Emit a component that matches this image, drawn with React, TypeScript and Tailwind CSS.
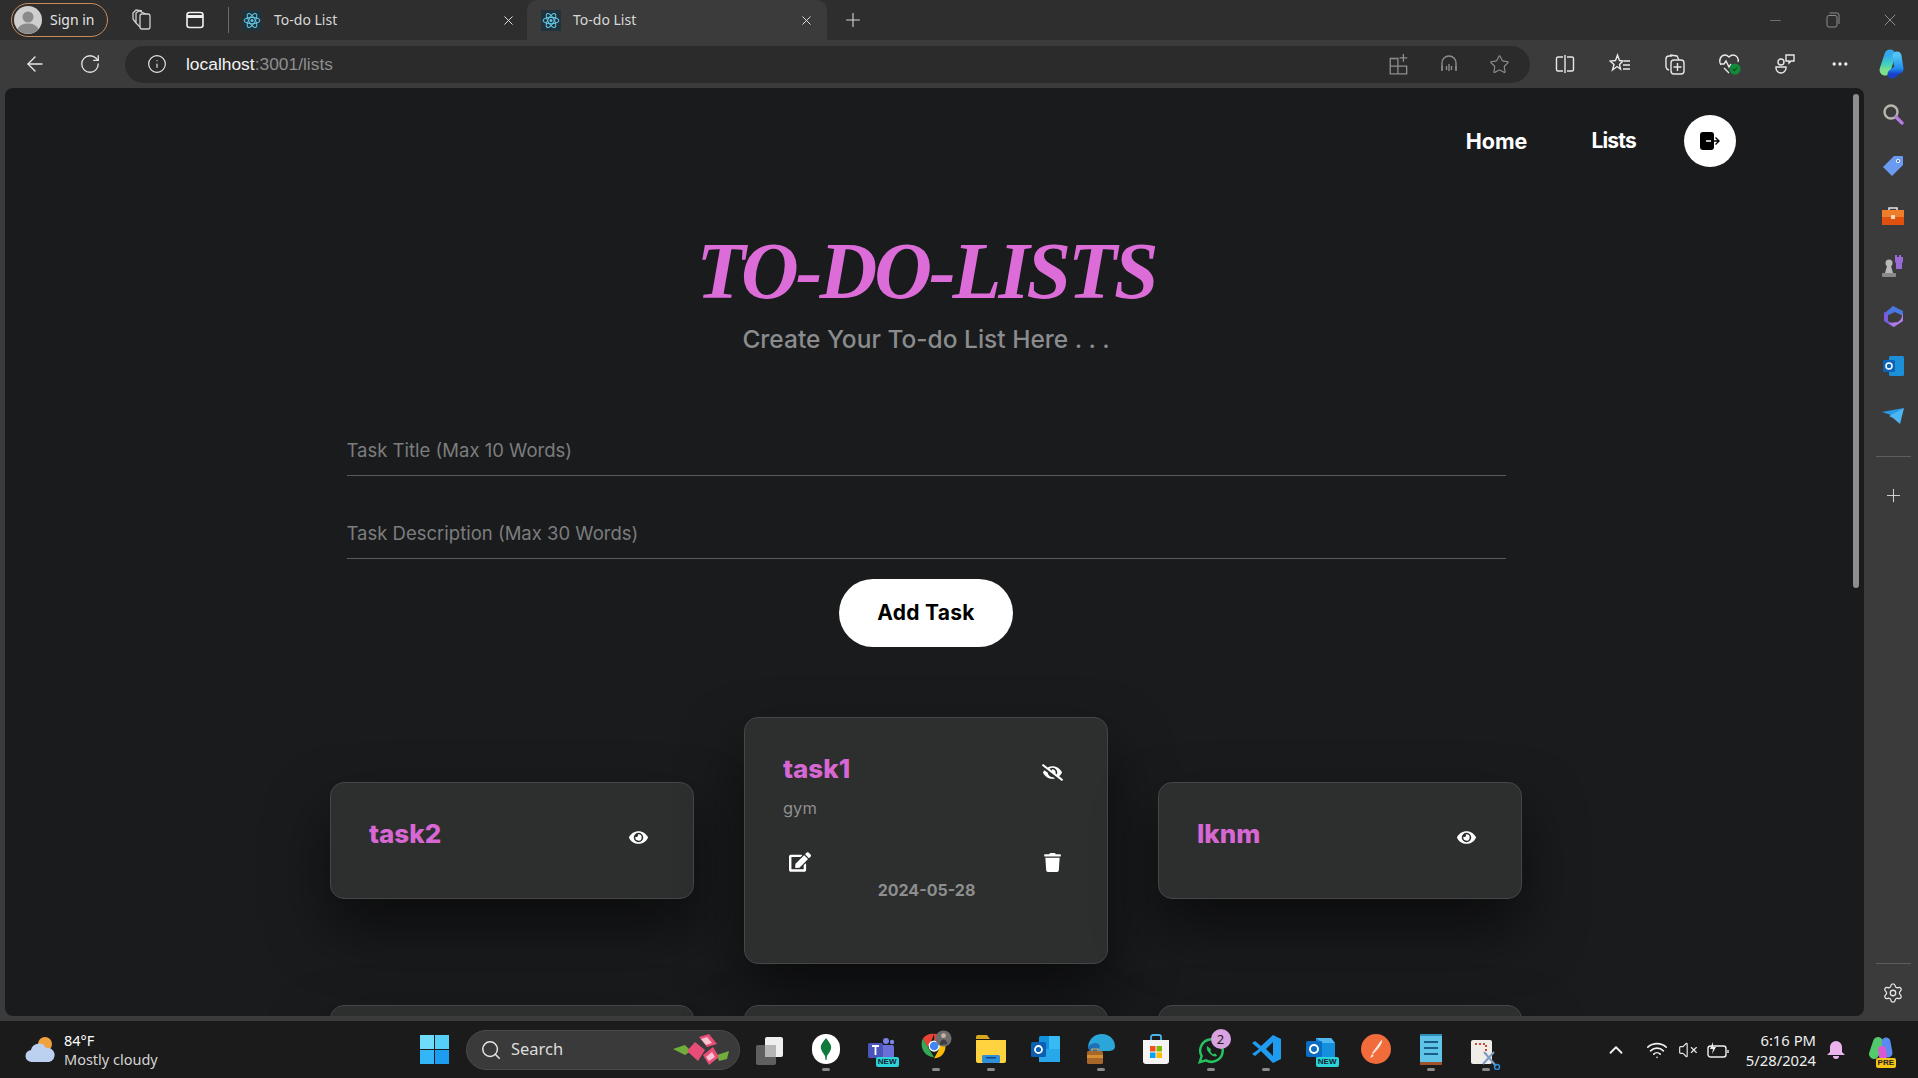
import { FaEdit, FaEye, FaEyeSlash, FaTrash } from 'react-icons/fa'
import {
  ArrowLeft,
  ChevronUp,
  Ellipsis,
  Info,
  Minus,
  Plus,
  RotateCw,
  Search,
  Settings,
  Star,
  VolumeX,
  Wifi,
  X,
} from 'lucide-react'

const POPPINS = "font-['Inter','Noto_Sans',sans-serif]"

function AtomIcon() {
  return (
    <span className="flex h-[21px] w-[20px] shrink-0 items-center justify-center bg-[#20323c]">
      <svg width="18" height="19" viewBox="0 0 24 24" fill="none" stroke="#61c7e6" strokeWidth="1.4">
        <ellipse cx="12" cy="12" rx="10.5" ry="4.2" />
        <ellipse cx="12" cy="12" rx="10.5" ry="4.2" transform="rotate(60 12 12)" />
        <ellipse cx="12" cy="12" rx="10.5" ry="4.2" transform="rotate(120 12 12)" />
        <circle cx="12" cy="12" r="2" fill="#61c7e6" stroke="none" />
      </svg>
    </span>
  )
}

function BrowserTab({ active }: { active?: boolean }) {
  return (
    <div
      className={
        active
          ? 'flex h-10 w-[300px] items-center rounded-t-[10px] bg-[#3b3b3b] pl-[14px] pr-[13px]'
          : 'flex h-10 w-[297px] items-center pl-[12px] pr-[11px]'
      }
    >
      <AtomIcon />
      <span className="-mt-px ml-3 flex-1 font-['Noto_Sans',sans-serif] text-[14px] text-[#d8d8d8]">To-do List</span>
      <X size={15} strokeWidth={1.5} className="text-[#e6e6e6]" />
    </div>
  )
}

function TabStrip() {
  return (
    <div className="flex h-10 shrink-0 items-center bg-[#2e2e2e] pl-[11px]">
      <div className="flex h-[34px] w-[97px] items-center rounded-full border border-[#c98b5c] pl-[2px]">
        <svg width="28" height="28" viewBox="0 0 28 28">
          <circle cx="14" cy="14" r="14" fill="#cfcfcf" />
          <circle cx="14" cy="11" r="5.5" fill="#8a8a8a" />
          <path d="M3.5 23a11 8 0 0 1 21 0a14 14 0 0 1-21 0z" fill="#8a8a8a" />
        </svg>
        <span className="-mt-px ml-[8px] font-['Noto_Sans',sans-serif] text-[14px] text-[#e4e4e4]">Sign in</span>
      </div>
      <div className="ml-[7px] flex w-[53px] justify-center">
        <svg width="22" height="24" viewBox="0 0 22 24" fill="none" stroke="#cfcfcf" strokeWidth="1.3">
          <rect x="9" y="6" width="10" height="15" rx="2" />
          <path d="M9 19 5 15V5l3-2 7 3M5 15 2 11V5l3-3 6 1" />
        </svg>
      </div>
      <div className="flex w-[53px] justify-center">
        <svg width="20" height="20" viewBox="0 0 20 20" fill="none" stroke="#f0f0f0" strokeWidth="1.6">
          <rect x="2" y="2.5" width="16" height="15" rx="2.5" />
          <path d="M2 6.5h16" strokeWidth="3" />
        </svg>
      </div>
      <div className="ml-[7px] mr-px h-[26px] w-px bg-[#6a6a6a]" />
      <BrowserTab />
      <BrowserTab active />
      <div className="flex w-[52px] justify-center">
        <Plus size={22} strokeWidth={1.2} className="text-[#d8d8d8]" />
      </div>
      <div className="flex-1" />
      <div className="flex w-[57px] justify-center">
        <Minus size={17} strokeWidth={1} className="text-[#8c8c8c]" />
      </div>
      <div className="flex w-[57px] justify-center">
        <svg width="14" height="16" viewBox="0 0 14 16" fill="none" stroke="#8c8c8c">
          <rect x="1" y="3.5" width="10" height="11.5" rx="2" />
          <path d="M3.5 1h7.5A2 2 0 0 1 13 3v9" />
        </svg>
      </div>
      <div className="flex w-[57px] justify-center">
        <X size={20} strokeWidth={1} className="text-[#a0a0a0]" />
      </div>
    </div>
  )
}

function Slot({ children, w = 'w-[55px]' }: { children: React.ReactNode; w?: string }) {
  return <div className={`flex shrink-0 justify-center ${w}`}>{children}</div>
}

function Toolbar() {
  const line = { fill: 'none', stroke: '#e8e8e8', strokeWidth: 1.4 }
  return (
    <div className="flex h-12 shrink-0 items-center bg-[#3b3b3b] pl-2">
      <Slot w="w-[54px]">
        <ArrowLeft size={24} strokeWidth={1.4} className="text-[#e8e8e8]" />
      </Slot>
      <Slot w="w-[55px]">
        <RotateCw size={22} strokeWidth={1.4} className="text-[#e8e8e8]" />
      </Slot>
      <div className="ml-2 flex h-[37px] w-[1405px] shrink-0 items-center rounded-full bg-[#2b2b2b] pl-[22px] pr-[6px]">
        <Info size={20} strokeWidth={1.4} className="text-[#e8e8e8]" />
        <span className="ml-[19px] flex-1 font-['Liberation_Sans',sans-serif] text-[17.4px] text-[#f2f2f2]">
          localhost<span className="text-[#8f8f8f]">:3001/lists</span>
        </span>
        <Slot w="w-[51px]">
          <svg width="22" height="23" viewBox="0 0 20 21" fill="none" stroke="#8e8e8e" strokeWidth="1.2">
            <path d="M2 5h7v7H2zM2 12h7v7H2zM9 12h8v7H9z" />
            <path d="M14 1v7M10.5 4.5h7" />
          </svg>
        </Slot>
        <Slot w="w-[50px]">
          <svg width="18" height="20" viewBox="0 0 18 20" fill="none" stroke="#8e8e8e" strokeWidth="1.4">
            <path d="M2 16V9a7 7 0 0 1 14 0v7" />
            <path d="M2 12v5M16 12v5M6.5 12v4M9 10v7M11.5 12v4" />
          </svg>
        </Slot>
        <Slot w="w-[50px]">
          <Star size={21} strokeWidth={1.3} className="text-[#8e8e8e]" />
        </Slot>
      </div>
      <div className="ml-[7px] flex items-center">
        <Slot>
          <svg width="20" height="22" viewBox="0 0 20 22" {...line}>
            <path d="M8 4H3a1.5 1.5 0 0 0-1.5 1.5v11A1.5 1.5 0 0 0 3 18h5M12 4h5a1.5 1.5 0 0 1 1.5 1.5v11A1.5 1.5 0 0 1 17 18h-5M10 2v18" />
          </svg>
        </Slot>
        <Slot>
          <svg width="22" height="22" viewBox="0 0 22 22" {...line}>
            <path d="m8.500 2 2 5.500 3.500.5-3.500 3.500 1 4.500-3.500-2.500-4.500 3.500 1.500-5.500L1 8l5.500-.5z" />
            <path d="M15 8h6M14 12h7M14 16h7" />
          </svg>
        </Slot>
        <Slot>
          <svg width="22" height="23" viewBox="0 0 22 23" {...line}>
            <path d="M8 3H5a3 3 0 0 0-3 3v8a4 4 0 0 0 3 3M6 2l7 1 2 4" />
            <rect x="7" y="7" width="13" height="14" rx="3" />
            <path d="M13.5 10v8M9.5 14h8" />
          </svg>
        </Slot>
        <Slot>
          <svg width="24" height="24" viewBox="0 0 24 24">
            <path
              d="M3 13C0 8 3 3 7 3c2 0 3 1 4 2 1-1 2-2 4-2 4 0 6 4 5 7M2 12h4l2-3 3 6 2-3M6 16l5 5"
              {...line}
            />
            <circle cx="17" cy="17" r="5.5" fill="#138a3a" />
            <path d="m14.8 17 1.6 1.6 2.8-3" fill="none" stroke="#0c4f22" strokeWidth="1.2" />
          </svg>
        </Slot>
        <Slot>
          <svg width="22" height="22" viewBox="0 0 22 22" {...line}>
            <circle cx="7" cy="9" r="3" />
            <path d="M2 14h10v1a5 5 0 0 1-10 0z" />
            <path d="M12 2h8v6h-3l-2 2V8h-3z" />
          </svg>
        </Slot>
        <Slot>
          <Ellipsis size={20} strokeWidth={2} className="text-[#f0f0f0]" />
        </Slot>
        <Slot w="w-[50px]">
          <svg width="30" height="32" viewBox="0 0 30 32" fill="none" strokeLinecap="round">
            <defs>
              <linearGradient id="copilotLeft" x1="0" y1="0" x2="0" y2="1">
                <stop offset="0" stopColor="#35a8ee" />
                <stop offset="0.6" stopColor="#3fd0c0" />
                <stop offset="1" stopColor="#7fe08a" />
              </linearGradient>
              <linearGradient id="copilotRight" x1="0" y1="0" x2="0" y2="1">
                <stop offset="0" stopColor="#4fc4f5" />
                <stop offset="0.7" stopColor="#1f8cf0" />
                <stop offset="1" stopColor="#1840c8" />
              </linearGradient>
            </defs>
            <path d="M13 7 8 22" stroke="url(#copilotLeft)" strokeWidth="11" />
            <path d="M20 8 22 21 15 26" stroke="url(#copilotRight)" strokeWidth="9" strokeLinejoin="round" />
          </svg>
        </Slot>
      </div>
    </div>
  )
}

function LogoutIcon() {
  return (
    <svg width="24" height="20" viewBox="0 0 24 20">
      <rect x="2" y="1" width="14" height="18" rx="3" fill="#000" />
      <path d="M8 10h5" stroke="#fff" strokeWidth="1.4" />
      <path d="M13 10h8M17.5 6.5 21 10l-3.500 3.500" fill="none" stroke="#000" strokeWidth="1.4" />
    </svg>
  )
}

function TaskCard({ title, open }: { title?: string; open?: boolean }) {
  return (
    <div
      className={
        open
          ? 'h-[247px] rounded-[14px] border border-[#454647] bg-[#2d2e2e] pl-[38px] pr-[37px] pt-[34px] shadow-[0_30px_60px_rgba(0,0,0,0.55)]'
          : 'h-[117px] rounded-[14px] border border-[#454647] bg-[#2d2e2e] pl-[38px] pr-[37px] pt-[34px] shadow-[0_30px_60px_rgba(0,0,0,0.55)]'
      }
    >
      {title && (
        <div className="flex items-center justify-between">
          <span className={`${POPPINS} text-[26px] font-extrabold leading-[34px] text-[#d767d3]`}>
            {title}
          </span>
          <span className="mt-[6px] flex w-[36px] justify-center text-white">
            {open ? <FaEyeSlash size={21} /> : <FaEye size={19} />}
          </span>
        </div>
      )}
      {open && (
        <>
          <p className={`${POPPINS} mt-[10px] text-[16.5px] leading-[24px] text-[#8e8e8e]`}>gym</p>
          <div className="mt-[31px] flex items-center justify-between pl-[6px]">
            <FaEdit size={22} className="text-white" />
            <span className="flex w-[36px] justify-center text-white">
              <FaTrash size={19} />
            </span>
          </div>
          <p className={`${POPPINS} mt-[6px] text-center text-[16px] font-bold leading-[22px] text-[#8e8e8e]`}>
            2024-05-28
          </p>
        </>
      )}
    </div>
  )
}

function TodoPage() {
  return (
    <div className="min-w-0 flex-1 overflow-hidden">
      <nav className="flex items-center justify-end pr-[111px] pt-[27px]">
        <a className={`${POPPINS} text-[21.5px] font-bold text-white`}>Home</a>
        <a className={`${POPPINS} ml-[64px] text-[21px] font-bold tracking-[-0.8px] text-white`}>Lists</a>
        <button className="ml-[48px] flex h-[52px] w-[52px] items-center justify-center rounded-full bg-white">
          <LogoutIcon />
        </button>
      </nav>
      <h1 className="mt-[59px] text-center font-['Liberation_Serif',serif] text-[80px] font-bold italic leading-[90px] tracking-[-3px] text-[#db6cd8]">
        TO-DO-LISTS
      </h1>
      <p className={`${POPPINS} mt-2 text-center text-[24.5px] font-medium leading-[30px] text-[#8a8c8d]`}>
        Create Your To-do List Here . . .
      </p>
      <form className="mx-auto mt-[74px] flex w-[1159px] flex-col items-center">
        <input
          placeholder="Task Title (Max 10 Words)"
          className={`${POPPINS} h-12 w-full border-b border-[#5a5b5c] bg-transparent pb-[3px] text-[18.5px] outline-none placeholder:text-[#7c7d7e]`}
        />
        <input
          placeholder="Task Description (Max 30 Words)"
          className={`${POPPINS} mt-[35px] h-12 w-full border-b border-[#5a5b5c] bg-transparent pb-[3px] text-[18.5px] outline-none placeholder:text-[#7c7d7e]`}
        />
        <button
          type="button"
          className={`${POPPINS} mt-5 h-[68px] w-[174px] rounded-full bg-white text-[21px] font-bold tracking-[0.3px] text-black`}
        >
          Add Task
        </button>
      </form>
      <div className="mx-auto mt-[70px] grid w-[1192px] grid-cols-3 items-center gap-x-[50px] gap-y-[41px]">
        <TaskCard title="task2" />
        <TaskCard title="task1" open />
        <TaskCard title="lknm" />
        <TaskCard />
        <TaskCard />
        <TaskCard />
      </div>
    </div>
  )
}

function SideItem({ children, h = 'h-[50px]' }: { children: React.ReactNode; h?: string }) {
  return <div className={`flex shrink-0 items-center justify-center ${h}`}>{children}</div>
}

function SideBar() {
  return (
    <aside className="flex w-[54px] shrink-0 flex-col items-center pl-1 pt-px">
      <SideItem h="h-[51px]">
        <svg width="22" height="24" viewBox="0 0 22 24" fill="none">
          <circle cx="9" cy="9" r="6.500" stroke="#b9b5ac" strokeWidth="2.4" />
          <path d="m14 14 6 6" stroke="#b57be0" strokeWidth="3.400" strokeLinecap="round" />
        </svg>
      </SideItem>
      <SideItem h="h-[51px]">
        <svg width="22" height="22" viewBox="0 0 22 22">
          <path d="M12 1h8a1 1 0 0 1 1 1v8L10 21 1 12z" fill="#6a9bf0" />
          <circle cx="16" cy="6" r="2" fill="#fff" />
          <circle cx="16" cy="6" r="1" fill="#274a8a" />
        </svg>
      </SideItem>
      <SideItem>
        <svg width="22" height="20" viewBox="0 0 22 20">
          <path d="M7 5V2h8v3" fill="none" stroke="#e8e8e8" strokeWidth="1.500" />
          <rect y="4" width="22" height="8" fill="#ef7d2a" />
          <rect y="11" width="22" height="8" fill="#e0500f" />
          <rect x="9" y="9" width="4" height="4" fill="#f6d7c0" />
        </svg>
      </SideItem>
      <SideItem>
        <svg width="24" height="24" viewBox="0 0 24 24">
          <path d="M14 1h2v2h2V1h2v2h2V1v7l-1 1v6h-6V9l-1-1z" fill="#9a6ad6" />
          <circle cx="8" cy="9" r="3.500" fill="#b9b9b9" />
          <path d="M6 12h4l2 7H4z" fill="#b9b9b9" />
          <rect x="1" y="19" width="14" height="4" rx="1" fill="#8a8a8a" />
        </svg>
      </SideItem>
      <SideItem>
        <svg width="21" height="23" viewBox="0 0 21 23">
          <path d="M10 1 20 6v5L12 7 3 11V7z" fill="#4a76e0" />
          <path d="M1 7v9l9 6 2-2-7-4V8z" fill="#7a5cdc" />
          <path d="M20 8v8l-9 6-5-4 9-1 3-3z" fill="#b07be8" />
        </svg>
      </SideItem>
      <SideItem>
        <svg width="21" height="20" viewBox="0 0 21 20">
          <rect x="6" y="0" width="15" height="20" rx="1.500" fill="#1b8fd8" />
          <rect x="0" y="4" width="12" height="12" rx="1.500" fill="#0b63b8" />
          <circle cx="6" cy="10" r="3" fill="none" stroke="#fff" strokeWidth="1.500" />
        </svg>
      </SideItem>
      <SideItem>
        <svg width="22" height="18" viewBox="0 0 22 18">
          <path d="M0 5 22 1 12 9z" fill="#2a9ae6" />
          <path d="m7 9 15-8-4 16-7-6z" fill="#4cb6f2" />
          <path d="M0 5 8 9l3 6-3-6z" fill="#1976c2" />
        </svg>
      </SideItem>
      <div className="mt-[15px] h-px w-[35px] shrink-0 bg-[#5d5d5d]" />
      <div className="mt-[28px] flex justify-center">
        <Plus size={21} strokeWidth={1.2} className="text-[#cfcfcf]" />
      </div>
      <div className="flex-1" />
      <div className="h-px w-[35px] shrink-0 bg-[#5d5d5d]" />
      <div className="mb-[12px] mt-[18px] flex justify-center">
        <Settings size={22} strokeWidth={1.4} className="text-[#e6e6e6]" />
      </div>
    </aside>
  )
}

function Dot({ on }: { on?: boolean }) {
  return <span className={on ? 'mt-[3px] h-[3px] w-[8px] rounded-full bg-[#8a8a8a]' : 'mt-[3px] h-[3px] w-[8px]'} />
}

function NewTag() {
  return (
    <span className="absolute -bottom-[2px] -right-[2px] rounded-[2px] bg-[#2cd3d8] px-[2px] font-['Liberation_Sans',sans-serif] text-[8px] font-bold leading-[10px] text-[#123]">
      NEW
    </span>
  )
}

function TaskIcon({ children, on }: { children: React.ReactNode; on?: boolean }) {
  return (
    <div className="flex w-[55px] shrink-0 flex-col items-center pt-[5px]">
      <div className="relative flex h-[32px] w-[32px] items-center justify-center">{children}</div>
      <Dot on={on} />
    </div>
  )
}

function TaskBar() {
  return (
    <div className="flex h-[57px] shrink-0 items-center bg-[#1b1b1b] font-['Noto_Sans','Open_Sans',sans-serif] text-white">
      <div className="ml-[25px] flex w-[395px] shrink-0 items-center">
        <svg width="31" height="28" viewBox="0 0 31 28">
          <circle cx="20" cy="8" r="7" fill="#f0a23c" />
          <path d="M7 26a6 6 0 0 1-1-12 8 8 0 0 1 15-2 7 7 0 0 1 3 14z" fill="#bcd0f0" />
        </svg>
        <div className="ml-[8px] text-[14.5px] leading-[19px]">
          <div>84°F</div>
          <div className="text-[#d4d4d4]">Mostly cloudy</div>
        </div>
      </div>
      <svg width="29" height="29" viewBox="0 0 29 29" className="shrink-0">
        <rect width="14" height="14" fill="#6fdcfb" />
        <rect x="15" width="14" height="14" fill="#55cff8" />
        <rect y="15" width="14" height="14" fill="#32b6f5" />
        <rect x="15" y="15" width="14" height="14" fill="#1d9df0" />
      </svg>
      <div className="ml-[17px] flex h-[40px] w-[274px] shrink-0 items-center rounded-full border border-[#4a4a4a] bg-[#3a3a3a] pl-[13px] pr-2">
        <Search size={22} strokeWidth={1.6} className="text-[#e8e8e8]" />
        <span className="ml-[9px] flex-1 text-[16.5px] text-[#dcdcdc]">Search</span>
        <svg width="58" height="34" viewBox="0 0 58 34">
          <path d="m0 16 12-4 6 6-6 4zM44 22l12-4-2 8-8 2z" fill="#6fae3a" />
          <path d="m26 4 10-3 8 10-10 3zM14 18l8-9 10 8-7 11zM30 22l10-8 6 10-10 8z" fill="#e84d78" />
          <path d="m28 6 6-2 5 6-6 2zM33 24l6-5 3 5-6 4z" fill="#f6c4cf" />
        </svg>
      </div>
      <div className="ml-[15px] flex w-[36px] shrink-0 items-center">
        <svg width="30" height="30" viewBox="0 0 30 30">
          <rect x="10" y="2" width="18" height="20" rx="2" fill="#efefef" />
          <rect x="1" y="10" width="20" height="20" rx="2" fill="#6b6b6b" fillOpacity="0.85" />
          <rect x="10" y="10" width="11" height="12" fill="#b5b5b5" />
        </svg>
      </div>
      <div className="ml-[7px] flex shrink-0">
        <TaskIcon on>
          <span className="flex h-[30px] w-[28px] items-center justify-center rounded-full bg-white">
            <svg width="12" height="22" viewBox="0 0 12 22">
              <path d="M6 0c3 4 6 7 5 11-1 3-3 5-4 7l-.500 4h-1L5 18c-1-2-3-4-4-7C0 7 3 4 6 0z" fill="#0f7a3c" />
            </svg>
          </span>
        </TaskIcon>
        <TaskIcon>
          <svg width="28" height="28" viewBox="0 0 28 28">
            <circle cx="19" cy="6" r="3" fill="#7b83eb" />
            <circle cx="25" cy="7" r="2.200" fill="#7b83eb" />
            <rect x="14" y="10" width="13" height="14" rx="2" fill="#6a70d8" />
            <rect x="1" y="8" width="15" height="15" rx="1.500" fill="#4b53bc" />
            <path d="M5 11h7M8.500 11v9" stroke="#fff" strokeWidth="1.800" />
          </svg>
          <NewTag />
        </TaskIcon>
        <TaskIcon on>
          <svg width="34" height="36" viewBox="0 0 34 36" className="-mt-1">
            <path d="M15 4a13 13 0 0 1 12 7H15z" fill="#ea4335" />
            <path d="M3 9a13 13 0 0 1 12-5l-3 8-4 6z" fill="#ea4335" />
            <path d="M3 9 10 21l5 8A14 14 0 0 1 3 9z" fill="#34a853" />
            <path d="M15 30c7 0 13-6 12-15H15l5 6z" fill="#fbbc05" />
            <circle cx="15" cy="17" r="6" fill="#fff" />
            <circle cx="15" cy="17" r="4.500" fill="#4285f4" />
            <circle cx="25" cy="9" r="8.500" fill="#6d6d6d" />
            <path d="M21 16c0-4 2-6 4-6s4 2 4 5z" fill="#3b3f45" />
            <circle cx="25" cy="6" r="2.500" fill="#c9b3a0" />
          </svg>
        </TaskIcon>
        <TaskIcon on>
          <svg width="30" height="28" viewBox="0 0 30 28">
            <path d="M0 2a2 2 0 0 1 2-2h9l3 4H0z" fill="#d9a620" />
            <path d="M0 5h30v21a2 2 0 0 1-2 2H2a2 2 0 0 1-2-2z" fill="#ffd23f" />
            <rect x="6" y="20" width="18" height="8" rx="1.500" fill="#2f8fd8" />
            <rect x="10" y="22" width="10" height="1.500" fill="#0d4a86" />
          </svg>
        </TaskIcon>
        <TaskIcon>
          <svg width="29" height="28" viewBox="0 0 29 28">
            <rect x="8" y="1" width="21" height="26" rx="1.500" fill="#1490df" />
            <rect x="18" y="1" width="11" height="13" fill="#50d9ff" fillOpacity="0.6" />
            <rect x="8" y="14" width="21" height="13" fill="#28a8ea" />
            <rect x="0" y="7" width="15" height="15" rx="1.500" fill="#0a5fb0" />
            <circle cx="7.500" cy="14.500" r="3.500" fill="none" stroke="#fff" strokeWidth="1.800" />
          </svg>
        </TaskIcon>
        <TaskIcon on>
          <svg width="30" height="32" viewBox="0 0 30 32">
            <path d="M2 14C3 5 9 1 16 1c7 0 13 5 13 12 0 4-3 5-7 5H12c0 4 3 7 6 7-7 1-14-4-16-11z" fill="#2aa7d8" />
            <path d="M2 14c4-5 10-5 12-1l-2 5c0 3 1 5 3 7-6 0-11-4-13-11z" fill="#1f6fb5" />
            <rect x="1" y="18" width="16" height="13" rx="1.500" fill="#a5682a" />
            <rect x="1" y="22" width="16" height="3" fill="#d9912f" />
            <path d="M6 18v-2h6v2" fill="none" stroke="#e0a84a" strokeWidth="1.200" />
          </svg>
        </TaskIcon>
        <TaskIcon>
          <svg width="28" height="32" viewBox="0 0 28 32">
            <path d="M9 8V4a2 2 0 0 1 2-2h6a2 2 0 0 1 2 2v4" fill="none" stroke="#4db4e8" strokeWidth="1.800" />
            <path d="M1 7h26v21a3 3 0 0 1-3 3H4a3 3 0 0 1-3-3z" fill="#f4f4f4" />
            <rect x="8" y="13" width="5.500" height="5.500" fill="#f25022" />
            <rect x="14.500" y="13" width="5.500" height="5.500" fill="#7fba00" />
            <rect x="8" y="19.500" width="5.500" height="5.500" fill="#00a4ef" />
            <rect x="14.500" y="19.500" width="5.500" height="5.500" fill="#ffb900" />
          </svg>
        </TaskIcon>
        <TaskIcon on>
          <svg width="30" height="32" viewBox="0 0 24 24" className="mt-1" fill="none" stroke="#25c25f" strokeWidth="2">
            <path d="M3 21l1.500-5A9 9 0 1 1 8 19.500z" />
            <path d="M9 8c-1 2 0 4 2 6s4 3 6 2l-1.500-2-2 .500-2-2 .500-2z" fill="#25c25f" stroke="none" />
          </svg>
          <span className="absolute -right-[4px] -top-[4px] flex h-[20px] w-[20px] items-center justify-center rounded-full bg-[#d8a3e0] text-[13px] leading-none text-[#1b1b1b]">
            2
          </span>
        </TaskIcon>
        <TaskIcon on>
          <svg width="30" height="30" viewBox="0 0 30 30">
            <path d="M22 1 30 5v20l-8 4L10 17l-6 5-3-2 7-5-7-6 3-2 6 5z" fill="#1f9cf0" />
            <path d="m22 8-7 7 7 7z" fill="#1b1b1b" />
          </svg>
        </TaskIcon>
        <TaskIcon>
          <svg width="30" height="28" viewBox="0 0 30 28">
            <path d="M10 3h15l4 5v16a2 2 0 0 1-2 2H10z" fill="#1490df" />
            <path d="M10 3h15l4 5H17z" fill="#50b8f0" />
            <rect x="0" y="6" width="16" height="16" rx="2" fill="#0a6cc4" />
            <circle cx="8" cy="14" r="4" fill="none" stroke="#fff" strokeWidth="2" />
          </svg>
          <NewTag />
        </TaskIcon>
        <TaskIcon>
          <span className="flex h-[30px] w-[30px] items-center justify-center rounded-full bg-[#f26b3a]">
            <svg width="16" height="20" viewBox="0 0 16 20">
              <path d="M14 1c1 2-2 7-6 11l-3 3-1-1 3-4c3-4 5-8 7-9zM4 15l-2 4 4-2z" fill="#f5e6dc" />
            </svg>
          </span>
        </TaskIcon>
        <TaskIcon on>
          <svg width="24" height="34" viewBox="0 0 24 34">
            <rect x="1" y="2" width="22" height="28" fill="#5fc4e8" />
            <path d="M1 2h22v2H1z" fill="#2f8fb8" />
            <rect x="1" y="30" width="22" height="3" fill="#a0522d" />
            <path d="M5 10h14M5 16h14M5 22h14" stroke="#1a5f88" strokeWidth="2" />
          </svg>
        </TaskIcon>
        <TaskIcon on>
          <svg width="32" height="34" viewBox="0 0 32 34" className="mt-2">
            <rect x="1" y="4" width="21" height="24" rx="2" fill="#f0ece8" />
            <path d="M5 8h11v10" fill="none" stroke="#d04a3a" strokeWidth="2" strokeDasharray="2 2" />
            <path d="M13 28 24 16M14 16l12 14" stroke="#7d9ec2" strokeWidth="2" />
            <circle cx="27" cy="31" r="2.500" fill="none" stroke="#2a8fd8" strokeWidth="1.500" />
          </svg>
        </TaskIcon>
      </div>
      <div className="flex-1" />
      <div className="flex items-center">
        <ChevronUp size={22} strokeWidth={2} className="mr-[19px] text-[#f0f0f0]" />
        <Wifi size={22} strokeWidth={1.8} className="mr-[10px] text-[#f0f0f0]" />
        <VolumeX size={20} strokeWidth={1.4} className="mr-[9px] text-[#e6e6e6]" />
        <svg width="22" height="18" viewBox="0 0 22 18" fill="none" stroke="#f0f0f0" strokeWidth="1.400" className="mr-[17px]">
          <rect x="1" y="5" width="18" height="11" rx="2.500" />
          <path d="M21 9v3" />
          <path d="M6 1 3 8h3l-1 5 4-7H6z" fill="#f0f0f0" stroke="none" />
        </svg>
        <div className="text-right text-[14.8px] leading-[20px] text-[#efefef]">
          <div>6:16 PM</div>
          <div>5/28/2024</div>
        </div>
        <svg width="18" height="20" viewBox="0 0 18 20" className="ml-[11px]">
          <path d="M9 1a6 6 0 0 1 6 6v5l3 3H0l3-3V7a6 6 0 0 1 6-6z" fill="#ecb4ef" />
          <path d="M6 16h6a3 3 0 0 1-6 0z" fill="#ecb4ef" />
        </svg>
        <div className="relative ml-[21px] mr-[22px] h-[28px] w-[30px]">
          <svg width="30" height="28" viewBox="0 0 30 28" fill="none" strokeLinecap="round">
            <path d="M12 6 8 18" stroke="#53c96b" strokeWidth="10" />
            <path d="M20 6 22 17" stroke="#5a8bf0" strokeWidth="9" />
            <path d="M16 14 17 20" stroke="#d95ad0" strokeWidth="8" />
          </svg>
          <span className="absolute -bottom-[4px] right-0 rounded-[2px] bg-[#f5c518] px-[2px] font-['Liberation_Sans',sans-serif] text-[8px] font-bold leading-[10px] text-[#222]">
            PRE
          </span>
        </div>
      </div>
    </div>
  )
}

export default function App() {
  return (
    <div className="flex h-screen w-full flex-col overflow-hidden bg-[#3b3b3b] font-['Open_Sans',sans-serif]">
      <TabStrip />
      <Toolbar />
      <div className="flex min-h-0 flex-1 pb-[5px] pl-[5px]">
        <main className="flex min-w-0 flex-1 overflow-hidden rounded-[8px] bg-[#1a1b1d]">
          <TodoPage />
          <div className="w-[17px] shrink-0 pl-[6px] pt-[6px]">
            <div className="h-[494px] w-[6px] rounded-full bg-[#8d8d8d]" />
          </div>
        </main>
        <SideBar />
      </div>
      <TaskBar />
    </div>
  )
}
